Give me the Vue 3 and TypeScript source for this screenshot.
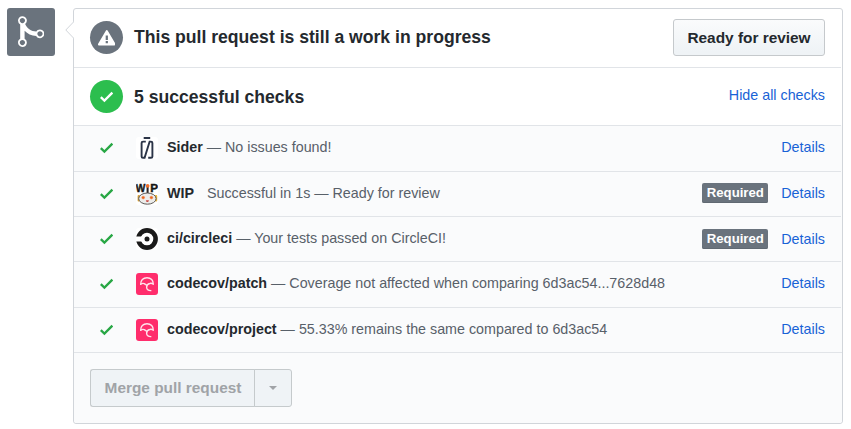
<script setup lang="ts">
type Logo = 'sider' | 'wip' | 'circle' | 'codecov'

interface Check {
  name: string
  text: string
  logo: Logo
  required?: boolean
  spaced?: boolean
}

const checks: Check[] = [
  { name: 'Sider', text: '— No issues found!', logo: 'sider' },
  { name: 'WIP', text: 'Successful in 1s — Ready for review', logo: 'wip', required: true, spaced: true },
  { name: 'ci/circleci', text: '— Your tests passed on CircleCI!', logo: 'circle', required: true },
  { name: 'codecov/patch', text: '— Coverage not affected when comparing 6d3ac54...7628d48', logo: 'codecov' },
  { name: 'codecov/project', text: '— 55.33% remains the same compared to 6d3ac54', logo: 'codecov' },
]
</script>

<template>
  <div class="page">
    <div class="merge-badge">
      <svg class="merge-icon" viewBox="0 0 12 16">
        <path d="M10 7c-.73 0-1.38.41-1.73 1.02V8C7.22 7.98 6 7.64 5.14 6.98c-.75-.58-1.5-1.61-1.89-2.44A1.993 1.993 0 0 0 2 .99C.89.99 0 1.89 0 3a2 2 0 0 0 1 1.72v6.56c-.59.35-1 .99-1 1.72 0 1.11.89 2 2 2a1.993 1.993 0 0 0 1-3.72V7.67c.67.7 1.44 1.27 2.3 1.69.86.42 2.03.63 2.97.64v-.02c.36.61 1 1.02 1.73 1.02 1.11 0 2-.89 2-2 0-1.11-.89-2-2-2zm-6.8 6c0 .66-.55 1.2-1.2 1.2-.65 0-1.2-.55-1.2-1.2 0-.65.55-1.2 1.2-1.2.65 0 1.2.55 1.2 1.2zM2 4.2C1.34 4.2.8 3.65.8 3c0-.65.55-1.2 1.2-1.2.65 0 1.2.55 1.2 1.2 0 .65-.55 1.2-1.2 1.2zm8 6c-.66 0-1.2-.55-1.2-1.2 0-.65.55-1.2 1.2-1.2.65 0 1.2.55 1.2 1.2 0 .65-.55 1.2-1.2 1.2z" />
      </svg>
    </div>

    <main class="box">
      <svg class="caret" viewBox="0 0 9 18">
        <path class="caret-fill" d="M9 .5L.7 9L9 17.5z" />
        <path class="caret-line" d="M8.5 1L.8 9L8.5 17" />
      </svg>

      <section class="head">
        <span class="circle gray">
          <svg class="alert-icon" viewBox="0 0 16 16">
            <path d="M8.893 1.5c-.183-.31-.52-.5-.887-.5s-.703.19-.886.5L.138 13.499a.98.98 0 0 0 0 1.001c.193.31.53.501.886.501h13.964c.367 0 .704-.19.877-.5a1.03 1.03 0 0 0 .01-1.002L8.893 1.5zm.133 11.497H6.987v-2.003h2.039v2.003zm0-3.004H6.987V5.987h2.039v4.006z" />
          </svg>
        </span>
        <h3 class="title">This pull request is still a work in progress</h3>
        <button class="ready" type="button">Ready for review</button>
      </section>

      <section class="head checks-head">
        <span class="circle green">
          <svg class="check-icon" viewBox="0 0 12 16"><path d="M12 5l-8 8-4-4 1.5-1.5L4 10l6.5-6.5L12 5z" /></svg>
        </span>
        <h3 class="title">5 successful checks</h3>
        <a class="link hide">Hide all checks</a>
      </section>

      <div class="rows">
        <div v-for="check in checks" :key="check.name" class="row">
          <svg class="check-icon row-check" viewBox="0 0 12 16"><path d="M12 5l-8 8-4-4 1.5-1.5L4 10l6.5-6.5L12 5z" /></svg>

          <span class="avatar" :class="check.logo">
            <svg v-if="check.logo === 'sider'" viewBox="0 0 22 22">
              <g fill="none" stroke="#2b3447" stroke-width="1.9">
                <path d="M7.7 1H14.2" />
                <path d="M9.8 4.6H7Q5.6 4.6 5.6 6V19.4Q5.6 20.8 7 20.8H8.6L13.6 4.6H15Q16.4 4.6 16.4 6V19.4Q16.4 20.8 15 20.8H12.2" />
              </g>
            </svg>

            <svg v-else-if="check.logo === 'wip'" viewBox="0 0 22 22">
              <text class="logo-letter" x="-.2" y="8.6" textLength="9.6" lengthAdjust="spacingAndGlyphs">W</text>
              <text class="logo-letter" x="14.2" y="8.6" textLength="7.8" lengthAdjust="spacingAndGlyphs">P</text>
              <path d="M11.6 4V10" stroke="#2b2422" stroke-width="2" />
              <circle cx="11.6" cy="2.8" r="1.9" fill="#ef702c" />
              <rect x="1.6" y="12" width="2.4" height="6.4" rx="1" fill="#d9a23a" />
              <rect x="18.8" y="12" width="2.4" height="6.4" rx="1" fill="#e8b539" />
              <ellipse cx="11.4" cy="15.6" rx="8.7" ry="5.6" fill="#ececea" stroke="#5c5956" stroke-width="1" />
              <circle cx="7.2" cy="14.6" r="1.8" fill="#f2a77f" />
              <circle cx="15.4" cy="14.6" r="1.8" fill="#f2a77f" />
              <circle cx="7.2" cy="14.6" r="1.2" fill="#e8651f" />
              <circle cx="15.4" cy="14.6" r="1.2" fill="#e8651f" />
              <path d="M9.8 17.2H13L12.2 19H10.5z" fill="#ca4d46" />
            </svg>

            <svg v-else-if="check.logo === 'circle'" viewBox="0 0 22 22">
              <circle cx="11" cy="11" r="8.6" fill="none" stroke="#1a1a1a" stroke-width="4.6" />
              <path d="M0 8.6H6.6V13.4H0z" fill="#fff" />
              <circle cx="11" cy="11" r="2.5" fill="#1a1a1a" />
            </svg>

            <svg v-else viewBox="0 0 22 22">
              <g fill="none" stroke="#ffe2ea" stroke-width="1.4" stroke-linecap="round" stroke-linejoin="round">
                <path d="M4.7 11.3C4.4 7.2 7.2 4.7 11 4.7S17.6 7.2 17.3 11.3Q15.7 9.9 13.8 10.5Q10.7 11.2 10.6 14.2Q10.8 17.4 14.8 17.6" />
                <path d="M4.7 11.3Q6.4 9.9 8.2 10.6L10.6 12.2" />
              </g>
            </svg>
          </span>

          <div class="description">
            <strong :class="{ spaced: check.spaced }">{{ check.name }}</strong>
            {{ check.text }}
          </div>
          <span v-if="check.required" class="required">Required</span>
          <a class="link">Details</a>
        </div>
      </div>

      <footer class="footer">
        <div class="button-group">
          <button class="merge" type="button" disabled>Merge pull request</button>
          <button class="dropdown" type="button" disabled aria-label="Select merge method"><span class="triangle"></span></button>
        </div>
      </footer>
    </main>
  </div>
</template>

<style>
body {
  background: #fff;
}
</style>

<style scoped>
* {
  box-sizing: border-box;
}

.page {
  display: flex;
  gap: 18px;
  width: 851px;
  height: 429px;
  padding: 8px 8px 5px 7px;
  overflow: hidden;
  color: #24292e;
  font-family: "Liberation Sans", Arial, sans-serif;
  font-size: 14.3px;
  line-height: 21.45px;
}

svg {
  display: block;
  flex: none;
}

.merge-badge {
  display: flex;
  justify-content: center;
  align-items: center;
  flex: none;
  width: 48px;
  height: 48px;
  border-radius: 3px;
  background: #6a737d;
}

.merge-icon {
  width: 26.4px;
  height: 35.2px;
  fill: #fff;
}

.box {
  position: relative;
  display: flex;
  flex-direction: column;
  flex: none;
  width: 770px;
  height: 416px;
  border: 1px solid #d1d5da;
  border-radius: 3px;
  background: #fff;
}

.caret {
  position: absolute;
  top: 12px;
  left: -9px;
  width: 9px;
  height: 18px;
}

.caret-fill {
  fill: #fff;
}

.caret-line {
  fill: none;
  stroke: #d1d5da;
}

.head {
  display: flex;
  align-items: center;
  flex: none;
  height: 58.2px;
  margin-right: 1px;
  padding: 0 16px 1.4px;
}

.checks-head {
  height: 58px;
  padding-bottom: 0;
  border-top: 1px solid #e1e4e8;
}

.circle {
  display: flex;
  align-items: center;
  justify-content: center;
  flex: none;
  width: 33px;
  height: 33px;
  border-radius: 50%;
  fill: #fff;
}

.gray {
  background: #6a737d;
}

.green {
  background: #2cbe4e;
}

.alert-icon {
  width: 17.6px;
  height: 17.6px;
}

.check-icon {
  width: 13.2px;
  height: 17.6px;
}

.title {
  margin: 0 auto 0 11px;
  font-size: 17.6px;
  line-height: 26px;
}

button {
  margin: 0;
  padding: 0;
  font: bold 15.4px/22px "Liberation Sans", Arial, sans-serif;
}

.ready {
  width: 152px;
  height: 37px;
  padding-top: 1px;
  border: 1px solid #c5c9cc;
  border-radius: 3px;
  background: linear-gradient(#fafbfc, #eff3f6 90%);
  color: #24292e;
}

.link {
  color: #1862d6;
  text-decoration: none;
}

.hide {
  padding-bottom: 1.6px;
}

.rows {
  flex: none;
  background: #fafbfc;
}

.row {
  display: flex;
  align-items: center;
  height: 45.4px;
  margin-right: 1px;
  padding: 0 16px 0 26px;
  border-top: 1px solid #e1e4e8;
}

.row-check {
  margin-top: -.6px;
  fill: #28a745;
}

.avatar {
  flex: none;
  width: 22px;
  height: 22px;
  margin: -.5px 9px 0 22.8px;
  overflow: hidden;
  border-radius: 3px;
  background: #fff;
}

.avatar.codecov {
  background: #ff2d6c;
}

.logo-letter {
  fill: #161616;
  stroke: #161616;
  stroke-width: .4px;
  font: bold 10.6px/1 "Liberation Sans", Arial, sans-serif;
}

.description {
  flex: 1;
  padding-bottom: 1px;
  color: #586069;
  white-space: nowrap;
}

.description strong {
  color: #24292e;
}

.description .spaced {
  margin-right: 9px;
}

.required {
  width: 66px;
  height: 20px;
  margin-top: -.8px;
  margin-right: 13px;
  border-radius: 2px;
  background: #6a737d;
  box-shadow: inset 0 -1px 0 #606972;
  color: #fff;
  font-size: 13.2px;
  font-weight: bold;
  line-height: 20px;
  text-align: center;
}

.row > .link {
  padding-bottom: 1px;
}

.row > .required + .link {
  padding-top: .3px;
  padding-bottom: 0;
}

.footer {
  flex: 1;
  padding: 16px;
  border-top: 1px solid #e1e4e8;
  border-radius: 0 0 3px 3px;
  background: #fafbfc;
}

.button-group {
  display: flex;
}

.merge,
.dropdown {
  height: 38px;
  border: 1px solid #c5cacc;
  background: #eff3f6;
  color: #a0a3a7;
}

.merge {
  width: 165px;
  border-right: 0;
  border-radius: 3px 0 0 3px;
}

.dropdown {
  display: flex;
  align-items: center;
  justify-content: center;
  width: 38px;
  margin-left: -1px;
  border-radius: 0 3px 3px 0;
}

.triangle {
  border-top: 4px solid #a0a3a7;
  border-right: 4px solid transparent;
  border-left: 4px solid transparent;
}
</style>
